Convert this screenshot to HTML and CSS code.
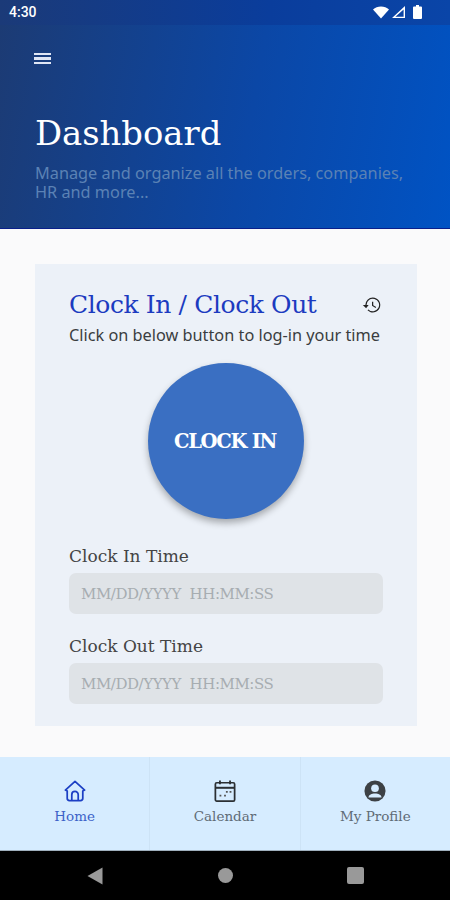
FILE: index.html
```html
<!DOCTYPE html>
<html lang="en">
<head>
   <meta charset="UTF-8">
   <meta name="viewport" content="width=device-width, initial-scale=1.0">
   <title>Dashboard</title>
   <link rel="stylesheet" href="styles.css">
</head>
<body>
   <div class="phone">
       <div class="status-bar">
           <span class="status-time">4:30</span>
           <div class="status-icons">
               <svg width="16" height="13" viewBox="0 0 16 13"><path d="M0 3.5C2 1.5 5 .5 8 .5s6 1 8 3L8 12.5z" fill="#fff"/></svg>
               <svg width="15" height="14" viewBox="0 0 15 14"><path d="M14 1v12H1zM12.6 4.4 4.4 11.7h8.2z" fill="#fff" fill-rule="evenodd"/></svg>
               <svg class="battery" width="9" height="14" viewBox="0 0 9 14"><path d="M3 0h3v1.5h2a1 1 0 0 1 1 1V13a1 1 0 0 1-1 1H1a1 1 0 0 1-1-1V2.500a1 1 0 0 1 1-1h2z" fill="#fff"/></svg>
           </div>
       </div>

       <header class="hero">
           <div class="menu-icon"><span></span><span></span><span></span></div>
           <h1>Dashboard</h1>
           <p>Manage and organize all the orders, companies, HR and more...</p>
       </header>

       <main class="content">
           <section class="clock-card">
               <div class="clock-head">
                   <h2>Clock In / Clock Out</h2>
                   <svg class="history-icon" width="20" height="20" viewBox="0 0 24 24"><path d="M13 3a9 9 0 0 0-9 9H1l3.900 3.900L8 12H5.500a7.500 7.500 0 1 1 2.200 5.300l-1.100 1.100A9 9 0 1 0 13 3zm-1 5v5l4.300 2.500.7-1.200-3.500-2.100V8z" fill="#222"/></svg>
               </div>
               <p class="clock-hint">Click on below button to log-in your time</p>
               <button class="clock-button">CLOCK IN</button>
               <label class="field-label">Clock In Time</label>
               <div class="field">MM/DD/YYYY&nbsp; HH:MM:SS</div>
               <label class="field-label second">Clock Out Time</label>
               <div class="field">MM/DD/YYYY&nbsp; HH:MM:SS</div>
           </section>
       </main>

       <nav class="bottom-nav">
           <div class="nav-item active">
               <svg width="22" height="22" viewBox="0 0 24 24" fill="none" stroke="#1c3fc4" stroke-width="1.900" stroke-linejoin="round"><path d="M1.500 11 12 1.500 22.500 11 20.500 12v8a2.500 2.500 0 0 1-2.500 2.500H6A2.500 2.500 0 0 1 3.500 20v-8z"/><path d="M8.500 22.500V16a3.500 3.500 0 0 1 7 0v6.500"/></svg>
               <span>Home</span>
           </div>
           <div class="nav-item">
               <svg width="22" height="22" viewBox="0 0 24 24" fill="none" stroke="#2b2f33" stroke-width="1.900"><rect x="1.500" y="3" width="21" height="20" rx="1.500"/><path d="M1.500 8.500h21" stroke-width="2.200"/><path d="M6.500 .5v4M17.500 .5v4" stroke-width="2"/><path d="M13 13h2M17 13h2M6 17h2M11 17h2" stroke-width="2" stroke="#555"/></svg>
               <span>Calendar</span>
           </div>
           <div class="nav-item">
               <svg width="22" height="22" viewBox="0 0 24 24"><circle cx="12" cy="12" r="11.500" fill="#3d4145"/><circle cx="12" cy="9" r="4.200" fill="#d6ecff"/><path d="M4.800 19c.5-3 3.500-4.200 7.200-4.200s6.700 1.200 7.200 4.200z" fill="#d6ecff"/></svg>
               <span>My Profile</span>
           </div>
       </nav>

       <div class="android-nav">
           <svg width="16" height="18" viewBox="0 0 16 18"><path d="M15.500 .5v17L.5 9z" fill="#999"/></svg>
           <div class="android-home"></div>
           <div class="android-recent"></div>
       </div>
   </div>
</body>
</html>
```

FILE: styles.css
```css
* {
    box-sizing: border-box;
}
html, body {
    margin: 0;
    padding: 0;
}
body {
    font-family: 'Noto Sans', sans-serif;
    background-color: #fafafb;
}
.phone {
    width: 450px;
    height: 900px;
    display: flex;
    flex-direction: column;
    overflow: hidden;
}
.status-bar {
    height: 25px;
    padding: 0 28px 0 9px;
    display: flex;
    align-items: center;
    justify-content: space-between;
    background: linear-gradient(90deg, #1b3a78, #0a3d9c 60%, #0a45a8);
    color: #fff;
}
.status-time {
    font-family: 'Roboto', sans-serif;
    font-size: 14px;
    font-weight: 500;
}
.status-icons {
    display: flex;
    align-items: center;
    gap: 2px;
}
.battery {
    margin-left: 5px;
}
.hero {
    height: 205px;
    padding: 28px 35px 0;
    background: linear-gradient(100deg, #1c3b74, #0b47a6 55%, #0053c4);
    border-bottom: 1px solid #0a1f8a;
}
.menu-icon {
    width: 17px;
    margin-left: -1px;
    display: flex;
    flex-direction: column;
    gap: 2px;
}
.menu-icon span {
    height: 2.500px;
    background-color: #dfe6f5;
}
.hero h1 {
    margin: 48px 0 0;
    font-family: 'DejaVu Serif', serif;
    font-size: 33.800px;
    font-weight: 400;
    line-height: 44px;
    color: #fff;
}
.hero p {
    margin: 8px 0 0;
    font-size: 16.300px;
    line-height: 19px;
    color: #5b82b5;
}
.content {
    flex: 1;
    padding: 35px 33px 31px 35px;
    background-color: #fafafb;
}
.clock-card {
    height: 462px;
    padding: 21px 34px 0;
    background-color: #ecf1f8;
}
.clock-head {
    display: flex;
    align-items: center;
    justify-content: space-between;
}
.clock-head h2 {
    margin: 0;
    font-family: 'DejaVu Serif', serif;
    font-size: 25px;
    font-weight: 400;
    letter-spacing: -.4px;
    line-height: 40px;
    color: #1c3bc0;
}
.history-icon {
    display: block;
    margin-right: 1px;
}
.clock-hint {
    margin: 0;
    font-size: 16.300px;
    line-height: 21px;
    color: #3a3d40;
    white-space: nowrap;
}
.clock-button {
    display: flex;
    align-items: center;
    justify-content: center;
    width: 156px;
    height: 156px;
    margin: 17px auto 0;
    padding: 0 2px 0 0;
    border: none;
    border-radius: 50%;
    background-color: #3a6fc2;
    box-shadow: 0 4px 7px rgba(0, 0, 0, 0.3);
    font-family: 'DejaVu Serif', serif;
    font-size: 19.500px;
    font-weight: bold;
    letter-spacing: -1.300px;
    color: #fff;
}
.field-label {
    display: block;
    margin-top: 26px;
    font-family: 'DejaVu Serif', serif;
    font-size: 17px;
    line-height: 23px;
    color: #444;
}
.field-label.second {
    margin-top: 21px;
}
.field {
    height: 41px;
    margin-top: 5px;
    padding-left: 12px;
    display: flex;
    align-items: center;
    border-radius: 7px;
    background-color: #dfe3e7;
    font-family: 'DejaVu Serif', serif;
    font-size: 15px;
    letter-spacing: -.45px;
    color: #a7adb1;
}
.bottom-nav {
    height: 94px;
    display: flex;
    background-color: #d6ecff;
    border-bottom: 1px solid #9fb0bd;
}
.nav-item {
    flex: 1;
    padding-top: 23px;
    display: flex;
    flex-direction: column;
    align-items: center;
    gap: 5px;
    border-right: 1px solid #cde3f6;
    font-family: 'DejaVu Serif', serif;
    font-size: 13.500px;
    line-height: 19px;
    color: #5f6b76;
}
.nav-item:last-child {
    border-right: none;
}
.nav-item.active {
    color: #3c62c8;
}
.android-nav {
    height: 49px;
    display: flex;
    align-items: center;
    background-color: #000;
    padding-left: 87px;
    gap: 114.500px;
}
.android-home {
    width: 15px;
    height: 15px;
    border-radius: 50%;
    background-color: #999;
}
.android-recent {
    width: 17px;
    height: 17px;
    border-radius: 2px;
    background-color: #999;
}
```
